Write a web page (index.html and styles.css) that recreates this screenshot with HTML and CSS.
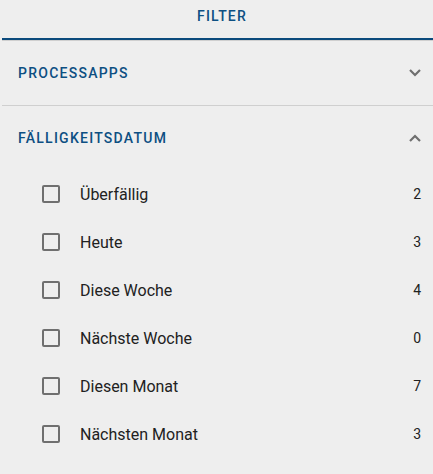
FILE: index.html
```html
<!DOCTYPE html>
<html lang="de">
<head>
<meta charset="utf-8">
<link rel="stylesheet" href="styles.css">
</head>
<body>
<div class="sidebar">
  <div class="tabs">
    <div class="tab">FILTER</div>
    <div class="ink"></div>
  </div>
  <div class="panel">
    <div class="panel-header">
      <span class="panel-title">PROCESSAPPS</span>
      <svg class="chev" width="12" height="8" viewBox="0 0 12 8"><polyline points="1,1 6,6 11,1" fill="none" stroke="#6f6f6f" stroke-width="2.2"/></svg>
    </div>
  </div>
  <div class="panel">
    <div class="panel-header">
      <span class="panel-title">FÄLLIGKEITSDATUM</span>
      <svg class="chev" width="12" height="8" viewBox="0 0 12 8"><polyline points="1,7 6,2 11,7" fill="none" stroke="#6f6f6f" stroke-width="2.2"/></svg>
    </div>
    <ul class="options">
      <li class="option"><span class="box"></span><span class="label">Überfällig</span><span class="count">2</span></li>
      <li class="option"><span class="box"></span><span class="label">Heute</span><span class="count">3</span></li>
      <li class="option"><span class="box"></span><span class="label">Diese Woche</span><span class="count">4</span></li>
      <li class="option"><span class="box"></span><span class="label">Nächste Woche</span><span class="count">0</span></li>
      <li class="option"><span class="box"></span><span class="label">Diesen Monat</span><span class="count">7</span></li>
      <li class="option"><span class="box"></span><span class="label">Nächsten Monat</span><span class="count">3</span></li>
    </ul>
  </div>
</div>
</body>
</html>
```

FILE: styles.css
```css
html, body {
  margin: 0;
  padding: 0;
  background: #eeeeee;
}
body {
  font-family: Roboto, "Liberation Sans", sans-serif;
  color: #212121;
}
.sidebar {
  padding-left: 2px;
}
.tabs {
  border-bottom: 1px solid #cfcfcf;
}
.tab {
  height: 38px;
  box-sizing: border-box;
  padding: 6px 0 0 9px;
  line-height: 20px;
  text-align: center;
  font-size: 14px;
  font-weight: 500;
  letter-spacing: 1.2px;
  color: #0d4f82;
}
.ink {
  height: 2px;
  background: #0b4a7c;
}
.panel {
  border-bottom: 1px solid #cfcfcf;
}
.panel:last-child {
  border-bottom: none;
}
.panel-header {
  height: 64px;
  display: flex;
  align-items: center;
  justify-content: space-between;
  padding: 0 12px 0 16px;
}
.panel-title {
  font-size: 14px;
  font-weight: 500;
  letter-spacing: 1.25px;
  color: #0d4f82;
}
.chev {
  display: block;
}
.options {
  list-style: none;
  margin: 0;
  padding: 0;
}
.option {
  height: 48px;
  display: flex;
  align-items: center;
  padding: 0 12px 0 40px;
}
.box {
  width: 18px;
  height: 18px;
  box-sizing: border-box;
  border: 2px solid #6f6f6f;
  border-radius: 2px;
  flex: none;
}
.label {
  margin-left: 20px;
  font-size: 16px;
  flex: 1;
}
.count {
  font-size: 14px;
}
```
